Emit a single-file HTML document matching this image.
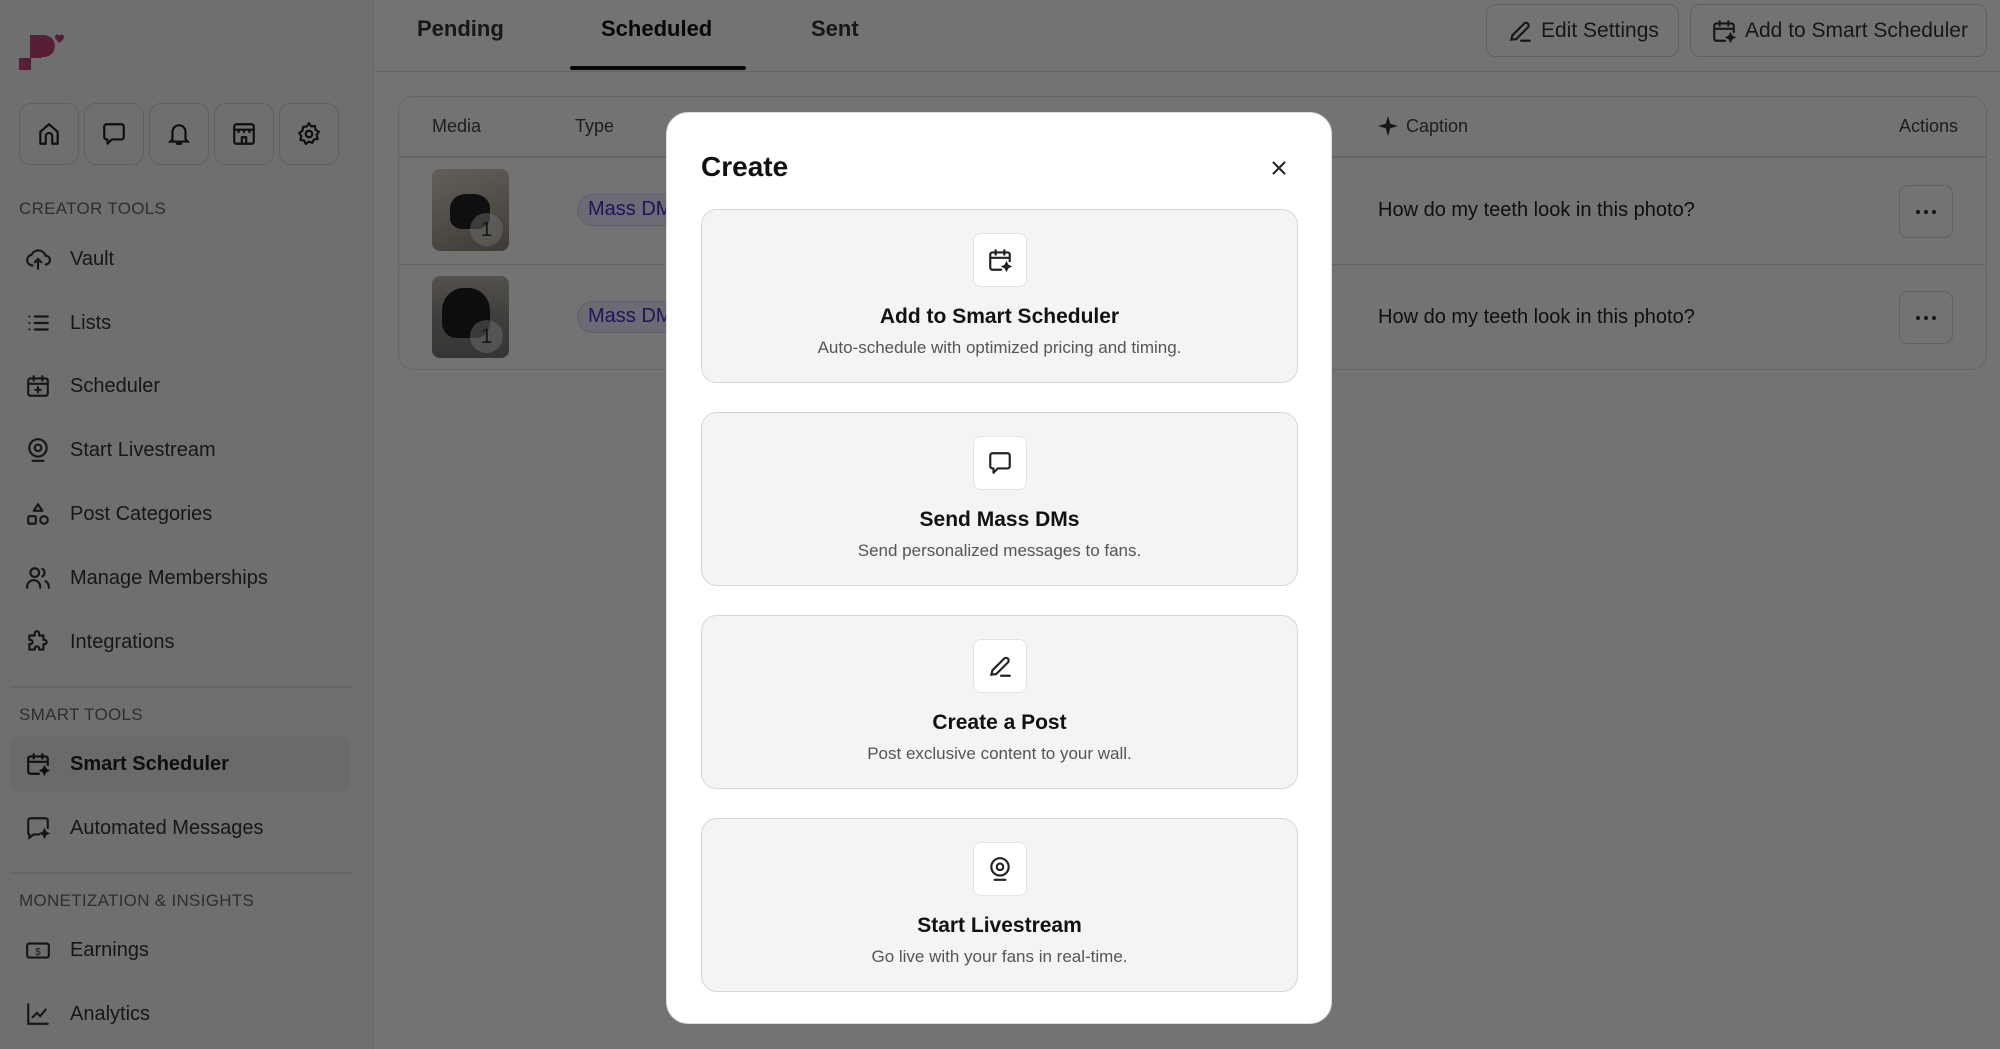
<!DOCTYPE html>
<html><head><meta charset="utf-8">
<style>
*{box-sizing:border-box;margin:0;padding:0}
body{width:2000px;height:1049px;overflow:hidden;font-family:"Liberation Sans",sans-serif;background:#fff;position:relative;color:#222}
.abs{position:absolute}
svg{display:block}
.side{left:0;top:0;width:374px;height:1049px;background:#f7f7f8;border-right:1px solid #e8e8e8}
.ib{position:absolute;top:103px;width:60px;height:62px;border:1.5px solid #d6d6d8;border-radius:12px;display:flex;align-items:center;justify-content:center;background:#f7f7f8}
.sec{position:absolute;left:19px;font-size:17px;color:#666;letter-spacing:.3px}
.it{position:absolute;left:9px;width:342px;height:56px;display:flex;align-items:center;font-size:20px;color:#333;border-radius:10px}
.it svg{margin-left:16px;margin-right:19px}
.hr{position:absolute;left:10px;width:341px;height:2px;background:#e4e4e6}
.tab{position:absolute;top:16px;font-size:22px;font-weight:bold;color:#333}
.btn{position:absolute;top:4px;height:53px;border:1.5px solid #d6d6d8;border-radius:10px;display:flex;align-items:center;font-size:21px;color:#333;padding-left:20px}
.btn svg{margin-right:8px}
.th{position:absolute;top:116px;font-size:18px;color:#444}
.thumb{position:absolute;left:432px;width:77px;height:82px;border-radius:8px;overflow:hidden}
.badge{position:absolute;right:6px;bottom:5px;width:33px;height:33px;border-radius:50%;background:rgba(255,255,255,.45);font-size:21px;color:#333;display:flex;align-items:center;justify-content:center}
.pill{position:absolute;left:577px;height:32px;width:120px;border:1.5px solid #d8d0f5;background:#f0ecfd;border-radius:16px;color:#4b2bd0;font-size:20px;padding-left:10px;line-height:29px}
.cap{position:absolute;left:1378px;font-size:20px;color:#222}
.dots{position:absolute;left:1899px;width:54px;height:53px;border:1.5px solid #d6d6d8;border-radius:9px;display:flex;align-items:center;justify-content:center;gap:4px}
.dots i{width:4px;height:4px;background:#333;border-radius:50%}
.ov{left:0;top:0;width:2000px;height:1049px;background:rgba(0,0,0,.55)}
.modal{left:666px;top:112px;width:666px;height:912px;background:#fff;border-radius:22px;border:1px solid #ddd}
.card{position:absolute;left:34px;width:597px;height:174px;background:#f4f4f5;border:1.5px solid #d6d6d8;border-radius:16px;text-align:center}
.card .ic{position:absolute;left:271px;top:23px;width:54px;height:54px;background:#fff;border:1px solid #e4e4e6;border-radius:8px;display:flex;align-items:center;justify-content:center}
.card h3{position:absolute;left:0;right:0;top:95px;font-size:21px;font-weight:bold;color:#111}
.card p{position:absolute;left:0;right:0;top:128px;font-size:17px;color:#555}
</style></head><body>

<div class="abs side">
  <svg class="abs" style="left:0;top:0" width="70" height="75" viewBox="0 0 70 75"><path d="M30 35h14a11 11 0 0 1 0 22h-2v1h-11v12H19V58h11z" fill="#c2437a"/><path d="M55 37c0-2.5 3.5-3.5 4.5-1c1-2.5 4.5-1.5 4.5 1c0 2.5-4.5 6-4.5 6s-4.5-3.5-4.5-6z" fill="#c2437a"/></svg>
  <div class="ib" style="left:19px"><svg width="26" height="26" viewBox="0 0 24 24" fill="none" stroke="#222" stroke-width="2" stroke-linejoin="round"><path d="M4 21V10l8-7 8 7v11h-5v-7a3 3 0 0 0-6 0v7z"/></svg></div>
  <div class="ib" style="left:84px"><svg width="26" height="26" viewBox="0 0 24 24" fill="none" stroke="#222" stroke-width="2" stroke-linejoin="round"><path d="M5 3h14a2 2 0 0 1 2 2v10a2 2 0 0 1-2 2H10l-4 4v-4H5a2 2 0 0 1-2-2V5a2 2 0 0 1 2-2z"/></svg></div>
  <div class="ib" style="left:149px"><svg width="26" height="26" viewBox="0 0 24 24" fill="none" stroke="#222" stroke-width="2" stroke-linecap="round"><path d="M6 17V10a6 6 0 0 1 12 0v7l2 2H4z"/><path d="M10 21h4"/></svg></div>
  <div class="ib" style="left:214px"><svg width="26" height="26" viewBox="0 0 24 24" fill="none" stroke="#222" stroke-width="2"><rect x="3" y="3" width="18" height="18" rx="2"/><path d="M3 8h18M7 8v3M12 8v3M17 8v3M10 21v-6h4v6"/></svg></div>
  <div class="ib" style="left:279px"><svg width="26" height="26" viewBox="0 0 24 24" fill="none" stroke="#222" stroke-width="2"><circle cx="12" cy="12" r="3"/><path d="M12 2l2 3 3.5-.5.5 3.5 3 2-2 3 1 3.5-3.5.5-1.5 3.2L12 19l-3 2.2L7.5 18 4 17.5l1-3.5-2-3 3-2 .5-3.5L10 5z" stroke-linejoin="round"/></svg></div>

  <div class="sec" style="top:199px">CREATOR TOOLS</div>
  <div class="it" style="top:231px"><svg width="26" height="26" viewBox="0 0 24 24" fill="none" stroke="#333" stroke-width="2" stroke-linecap="round"><path d="M7 18a5 5 0 0 1-1-9.9A7 7 0 0 1 19 9a4 4 0 0 1 0 8"/><path d="M12 21v-9M9 15l3-3 3 3"/></svg>Vault</div>
  <div class="it" style="top:295px"><svg width="26" height="26" viewBox="0 0 24 24" fill="none" stroke="#333" stroke-width="2" stroke-linecap="round"><path d="M9 6h12M9 12h12M9 18h12M4 6h.01M4 12h.01M4 18h.01"/></svg>Lists</div>
  <div class="it" style="top:358px"><svg width="26" height="26" viewBox="0 0 24 24" fill="none" stroke="#333" stroke-width="2" stroke-linecap="round"><rect x="3" y="5" width="18" height="16" rx="2"/><path d="M8 3v4M16 3v4M3 10h18M12 13v5M9.5 15.5h5"/></svg>Scheduler</div>
  <div class="it" style="top:422px"><svg width="26" height="26" viewBox="0 0 24 24" fill="none" stroke="#333" stroke-width="2" stroke-linecap="round"><circle cx="12" cy="10" r="8"/><circle cx="12" cy="10" r="3"/><path d="M7 22h10"/></svg>Start Livestream</div>
  <div class="it" style="top:486px"><svg width="26" height="26" viewBox="0 0 24 24" fill="none" stroke="#333" stroke-width="2" stroke-linejoin="round"><path d="M12 3l4 6H8z"/><rect x="3" y="14" width="7" height="7" rx="1"/><circle cx="17.5" cy="17.5" r="3.5"/></svg>Post Categories</div>
  <div class="it" style="top:550px"><svg width="26" height="26" viewBox="0 0 24 24" fill="none" stroke="#333" stroke-width="2" stroke-linecap="round"><circle cx="9" cy="7" r="4"/><path d="M2 21v-1a6 6 0 0 1 12 0v1M16 3.5a4 4 0 0 1 0 7M22 21v-1a6 6 0 0 0-3-5"/></svg>Manage Memberships</div>
  <div class="it" style="top:614px"><svg width="26" height="26" viewBox="0 0 24 24" fill="none" stroke="#333" stroke-width="2" stroke-linejoin="round"><path d="M9 4a2 2 0 0 1 4 0v2h4v4h1a2 2 0 0 1 0 4h-1v5h-4v-1a2 2 0 0 0-4 0v1H4v-5h1a2 2 0 0 0 0-4H4V6h5z"/></svg>Integrations</div>
  <div class="hr" style="top:686px"></div>
  <div class="sec" style="top:705px">SMART TOOLS</div>
  <div class="it" style="top:736px;background:#ececee;font-weight:bold;color:#222"><svg width="26" height="26" viewBox="0 0 24 24" fill="none" stroke="#222" stroke-width="2" stroke-linecap="round"><path d="M13 21H5a2 2 0 0 1-2-2V7a2 2 0 0 1 2-2h14a2 2 0 0 1 2 2v6M8 3v4M16 3v4M3 10h18"/><path d="M18 15l1 2 2 1-2 1-1 2-1-2-2-1 2-1z" fill="#222"/></svg>Smart Scheduler</div>
  <div class="it" style="top:800px"><svg width="26" height="26" viewBox="0 0 24 24" fill="none" stroke="#333" stroke-width="2" stroke-linecap="round"><path d="M13 18H8l-4 3v-3a1 1 0 0 1-1-1V5a2 2 0 0 1 2-2h14a2 2 0 0 1 2 2v7"/><path d="M18 14l1 2 2 1-2 1-1 2-1-2-2-1 2-1z" fill="#333"/></svg>Automated Messages</div>
  <div class="hr" style="top:872px"></div>
  <div class="sec" style="top:891px">MONETIZATION &amp; INSIGHTS</div>
  <div class="it" style="top:922px"><svg width="26" height="26" viewBox="0 0 24 24" fill="none" stroke="#333" stroke-width="2"><rect x="2" y="6" width="20" height="13" rx="2"/><text x="12" y="16.5" font-size="9" text-anchor="middle" fill="#333" stroke="none" font-family="Liberation Sans">$</text></svg>Earnings</div>
  <div class="it" style="top:986px"><svg width="26" height="26" viewBox="0 0 24 24" fill="none" stroke="#333" stroke-width="2" stroke-linecap="round"><path d="M3 3v18h18M7 15l4-4 3 3 5-6"/></svg>Analytics</div>
</div>

<div class="tab" style="left:417px">Pending</div>
<div class="tab" style="left:601px;color:#111">Scheduled</div>
<div class="tab" style="left:811px">Sent</div>
<div class="abs" style="left:570px;top:66px;width:176px;height:4px;background:#111;border-radius:2px"></div>
<div class="abs" style="left:374px;top:71px;width:1626px;height:1px;background:#e2e2e2"></div>
<div class="btn" style="left:1486px;width:193px"><svg width="26" height="26" viewBox="0 0 24 24" fill="none" stroke="#333" stroke-width="2" stroke-linecap="round"><path d="M4 20l1-4L16 5a2.5 2.5 0 0 1 3.5 3.5L8.5 19.5z"/><path d="M13 21h8"/></svg>Edit Settings</div>
<div class="btn" style="left:1690px;width:297px"><svg width="26" height="26" viewBox="0 0 24 24" fill="none" stroke="#333" stroke-width="2" stroke-linecap="round"><path d="M13 21H5a2 2 0 0 1-2-2V7a2 2 0 0 1 2-2h14a2 2 0 0 1 2 2v6M8 3v4M16 3v4M3 10h18"/><path d="M18 15l1 2 2 1-2 1-1 2-1-2-2-1 2-1z" fill="#333"/></svg>Add to Smart Scheduler</div>

<div class="abs" style="left:398px;top:96px;width:1589px;height:274px;border:1.5px solid #e0e0e2;border-radius:16px"></div>
<div class="abs" style="left:399px;top:156px;width:1587px;height:2px;background:#e2e2e2"></div>
<div class="abs" style="left:399px;top:264px;width:1587px;height:1px;background:#e2e2e2"></div>
<div class="th" style="left:432px">Media</div>
<div class="th" style="left:575px">Type</div>
<svg class="abs" style="left:1377px;top:115px" width="22" height="22" viewBox="0 0 24 24"><path d="M12 1l2.5 8.5L23 12l-8.5 2.5L12 23l-2.5-8.5L1 12l8.5-2.5z" fill="#333"/></svg>
<div class="th" style="left:1406px">Caption</div>
<div class="th" style="left:1899px">Actions</div>

<div class="thumb" style="top:169px;background:linear-gradient(160deg,#d9d2c6 0%,#bdb5a8 40%,#8a8378 100%)"><div style="position:absolute;left:18px;top:25px;width:40px;height:35px;background:#222;border-radius:40% 40% 30% 30%"></div><div class="badge">1</div></div>
<div class="thumb" style="top:276px;background:linear-gradient(180deg,#b9b4ac,#8f8b86 50%,#7a7672)"><div style="position:absolute;left:10px;top:12px;width:48px;height:50px;background:#1e1e1e;border-radius:45% 45% 30% 30%"></div><div class="badge">1</div></div>
<div class="pill" style="top:194px">Mass DMs</div>
<div class="pill" style="top:301px">Mass DMs</div>
<div class="cap" style="top:199px">How do my teeth look in this photo?</div>
<div class="cap" style="top:306px">How do my teeth look in this photo?</div>
<div class="dots" style="top:185px"><i></i><i></i><i></i></div>
<div class="dots" style="top:291px"><i></i><i></i><i></i></div>

<div class="abs ov"></div>

<div class="abs modal">
  <div class="abs" style="left:34px;top:38px;font-size:28px;font-weight:bold;color:#111">Create</div>
  <svg class="abs" style="left:601px;top:44px" width="22" height="22" viewBox="0 0 24 24" fill="none" stroke="#222" stroke-width="2.2" stroke-linecap="round"><path d="M6 6l12 12M18 6L6 18"/></svg>

  <div class="card" style="top:96px"><div class="ic"><svg width="26" height="26" viewBox="0 0 24 24" fill="none" stroke="#222" stroke-width="2" stroke-linecap="round"><path d="M13 21H5a2 2 0 0 1-2-2V7a2 2 0 0 1 2-2h14a2 2 0 0 1 2 2v6M8 3v4M16 3v4M3 10h18"/><path d="M18 15l1 2 2 1-2 1-1 2-1-2-2-1 2-1z" fill="#222"/></svg></div><h3>Add to Smart Scheduler</h3><p>Auto-schedule with optimized pricing and timing.</p></div>
  <div class="card" style="top:299px"><div class="ic"><svg width="26" height="26" viewBox="0 0 24 24" fill="none" stroke="#222" stroke-width="2" stroke-linejoin="round"><path d="M5 3h14a2 2 0 0 1 2 2v10a2 2 0 0 1-2 2H10l-4 4v-4H5a2 2 0 0 1-2-2V5a2 2 0 0 1 2-2z"/></svg></div><h3>Send Mass DMs</h3><p>Send personalized messages to fans.</p></div>
  <div class="card" style="top:502px"><div class="ic"><svg width="26" height="26" viewBox="0 0 24 24" fill="none" stroke="#222" stroke-width="2" stroke-linecap="round"><path d="M4 20l1-4L16 5a2.5 2.5 0 0 1 3.5 3.5L8.5 19.5z"/><path d="M13 21h8"/></svg></div><h3>Create a Post</h3><p>Post exclusive content to your wall.</p></div>
  <div class="card" style="top:705px"><div class="ic"><svg width="26" height="26" viewBox="0 0 24 24" fill="none" stroke="#222" stroke-width="2" stroke-linecap="round"><circle cx="12" cy="10" r="8"/><circle cx="12" cy="10" r="3"/><path d="M7 22h10"/></svg></div><h3>Start Livestream</h3><p>Go live with your fans in real-time.</p></div>
</div>
</body></html>
